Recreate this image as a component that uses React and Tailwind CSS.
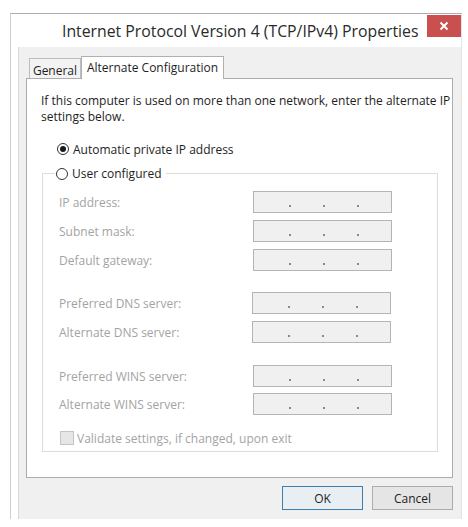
import React from "react";

function Dots() {
  return (
    <div className="flex items-start pt-[13px] pl-[35px] gap-[32px]">
      <div className="w-[2px] h-[2px] bg-[#8a8a8a]" />
      <div className="w-[2px] h-[2px] bg-[#8a8a8a]" />
      <div className="w-[2px] h-[2px] bg-[#8a8a8a]" />
    </div>
  );
}

function Row({ label, mt, shift }) {
  return (
    <div className={`flex items-center h-[22px] ${mt}`}>
      <div className={`${shift ? "w-[193px]" : "w-[194px]"} text-[#a3a3a3]`}>{label}</div>
      <div className="w-[139px] h-[22px] border border-[#b4b4b4] bg-[#f0f0f0]">
        <Dots />
      </div>
    </div>
  );
}

export default function App() {
  return (
    <div
      className="w-[468px] h-[527px] bg-white pt-[13px] pl-[10px] text-[12px] leading-[15px] text-[#1e1e1e]"
      style={{ fontFamily: '"Open Sans", "Noto Sans", sans-serif' }}
    >
      <div className="w-[452px] h-[506px] border-t border-l border-r border-t-[#adadad] border-l-[#cfcfcf] border-r-[#e4e4e4] bg-white flex flex-col">
        {/* title bar */}
        <div className="h-[33px] flex items-start justify-between">
          <div className="pl-[51px] pt-[6px] text-[15.8px] leading-[22px] text-[#2a2a2a] whitespace-nowrap">
            Internet Protocol Version 4 (TCP/IPv4) Properties
          </div>
          <div className="shrink-0 mt-[1px] w-[34px] h-[22px] bg-[#c9504e] flex items-center justify-center">
            <svg width="10" height="10" viewBox="0 0 10 10">
              <path d="M1.5 1.5 L8.5 8.5 M8.5 1.5 L1.5 8.5" stroke="white" strokeWidth="2" />
            </svg>
          </div>
        </div>
        {/* client */}
        <div className="ml-[7px] flex-1 bg-[#f0f0f0] border-l border-[#d8d8d8] flex flex-col">
          {/* tabs */}
          <div className="mt-[9px] ml-[8px] flex items-end h-[22px]">
            <div className="ml-[2px] w-[52px] h-[20px] border border-b-0 border-[#bdbdbd] bg-[#f3f3f3] flex items-center justify-center pt-[3px]">
              General
            </div>
            <div className="relative z-10 w-[143px] h-[23px] -mb-px border border-b-0 border-[#b0b0b0] bg-white flex items-center justify-center pb-[2px]">
              Alternate Configuration
            </div>
          </div>
          {/* panel */}
          <div className="ml-[7px] w-[427px] h-[400px] border border-[#acacac] bg-white pl-[14px] pt-[14px] flex flex-col">
            <div className="whitespace-nowrap leading-[16px]">
              <div>If this computer is used on more than one network, enter the alternate IP</div>
              <div>settings below.</div>
            </div>
            <div className="mt-[17px] ml-[16px] flex items-center h-[14px]">
              <div className="w-[12px] h-[12px] rounded-full border border-[#333] flex items-center justify-center">
                <div className="w-[6px] h-[6px] rounded-full bg-[#1a1a1a]" />
              </div>
              <span className="ml-[4px]">Automatic private IP address</span>
            </div>
            {/* group box */}
            <div className="mt-[17px] ml-[1px] w-[396px] h-[279px] border border-[#dcdcdc] pl-[16px] flex flex-col">
              <div className="-mt-[8px] -ml-[4px] self-start flex items-center h-[15px] bg-white pl-[1px] pr-[5px]">
                <div className="w-[12px] h-[12px] rounded-full border border-[#333] bg-white" />
                <span className="ml-[4px]">User configured</span>
              </div>
              <Row label="IP address:" mt="mt-[10px]" />
              <Row label="Subnet mask:" mt="mt-[7px]" />
              <Row label="Default gateway:" mt="mt-[7px]" />
              <Row label="Preferred DNS server:" mt="mt-[21px]" shift />
              <Row label="Alternate DNS server:" mt="mt-[7px]" shift />
              <Row label="Preferred WINS server:" mt="mt-[22px]" />
              <Row label="Alternate WINS server:" mt="mt-[6px]" />
              <div className="mt-[16px] ml-[1px] flex items-center h-[14px]">
                <div className="w-[14px] h-[14px] border border-[#c4c4c4] bg-[#e6e6e6]" />
                <span className="ml-[3px] text-[#a3a3a3]">Validate settings, if changed, upon exit</span>
              </div>
            </div>
          </div>
          {/* buttons */}
          <div className="mt-[8px] ml-[7px] w-[427px] flex justify-end gap-[9px]">
            <div className="w-[81px] h-[24px] border border-[#3c7fb1] bg-[#e9eef3] flex items-center justify-center">
              OK
            </div>
            <div className="w-[81px] h-[24px] border border-[#adadad] bg-[#e5e5e5] flex items-center justify-center">
              Cancel
            </div>
          </div>
        </div>
      </div>
    </div>
  );
}
